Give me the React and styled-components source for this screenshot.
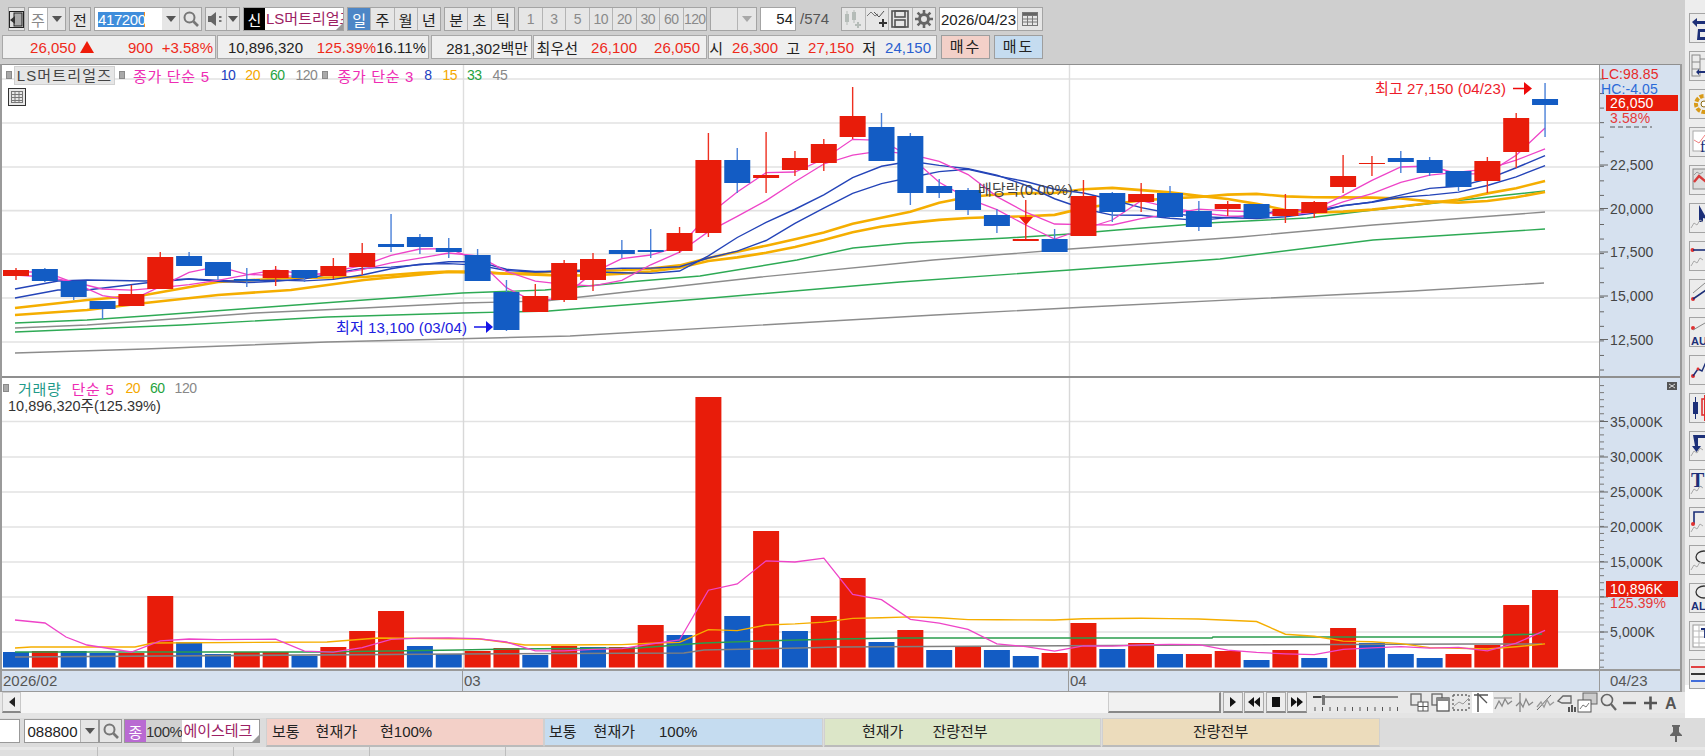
import React from 'react'
import styled, { createGlobalStyle } from 'styled-components'

const FONT = '"Liberation Sans", "Noto Sans CJK KR", sans-serif'

const RED = '#e81c0a'
const BLUE = '#135cc4'
const STEP = 28.85
const xAt = (i) => 16 + STEP * i

// [body top, body bottom, high, low, colour] in page pixels
const candles = [
  [270, 276, 268, 280, 'r'], [269, 281, 268, 282, 'b'], [281, 297, 281, 300, 'b'], [301, 309, 301, 319, 'b'],
  [294, 306, 285, 306, 'r'], [257, 289, 252, 289, 'r'], [256, 266, 252, 266, 'b'], [262, 276, 262, 280, 'b'],
  [279, 281, 268, 287, 'b'], [270, 278, 266, 286, 'r'], [270, 278, 270, 282, 'b'], [266, 276, 258, 279, 'r'],
  [253, 267, 243, 275, 'r'], [244, 247, 214, 252, 'b'], [237, 247, 234, 254, 'b'], [248, 252, 238, 258, 'b'],
  [255, 281, 249, 281, 'b'], [292, 330, 280, 331, 'b'], [296, 312, 284, 312, 'r'], [263, 300, 260, 302, 'r'],
  [259, 280, 253, 291, 'r'], [250, 254, 240, 258, 'b'], [250, 252, 229, 258, 'b'], [233, 251, 227, 253, 'r'],
  [160, 233, 133, 237, 'r'], [160, 183, 148, 193, 'b'], [175, 178, 132, 193, 'r'], [158, 170, 151, 176, 'r'],
  [144, 163, 139, 171, 'r'], [116, 137, 87, 139, 'r'], [127, 161, 113, 161, 'b'], [136, 193, 133, 205, 'b'],
  [186, 193, 179, 198, 'b'], [190, 210, 188, 215, 'b'], [215, 226, 209, 233, 'b'], [239, 241, 200, 241, 'r'],
  [239, 252, 229, 252, 'b'], [196, 236, 180, 236, 'r'], [193, 212, 192, 222, 'b'], [194, 202, 183, 212, 'r'],
  [193, 217, 186, 217, 'b'], [211, 227, 201, 231, 'b'], [204, 209, 201, 216, 'r'], [204, 218, 204, 218, 'b'],
  [209, 216, 194, 223, 'r'], [202, 213, 201, 218, 'r'], [176, 187, 155, 193, 'r'], [163, 164, 156, 176, 'r'],
  [158, 162, 151, 173, 'b'], [160, 173, 157, 176, 'b'], [171, 187, 171, 191, 'b'], [161, 181, 157, 193, 'r'],
  [118, 152, 113, 168, 'r'], [99, 105, 83, 137, 'b'],
]

// [bar top, colour]
const volumes = [
  [652, 'b'], [651, 'r'], [651, 'b'], [653, 'b'], [653, 'r'], [596, 'r'], [642, 'b'], [654, 'b'], [652, 'r'],
  [652, 'r'], [656, 'b'], [647, 'r'], [631, 'r'], [611, 'r'], [646, 'b'], [654, 'b'], [651, 'r'], [648, 'r'],
  [655, 'b'], [646, 'r'], [647, 'b'], [647, 'r'], [625, 'r'], [635, 'b'], [397, 'r'], [616, 'b'], [531, 'r'],
  [631, 'b'], [616, 'r'], [578, 'r'], [642, 'b'], [630, 'r'], [650, 'b'], [647, 'r'], [650, 'b'], [656, 'b'],
  [653, 'r'], [623, 'r'], [649, 'b'], [643, 'r'], [654, 'b'], [654, 'r'], [651, 'r'], [660, 'b'], [650, 'r'],
  [658, 'b'], [628, 'r'], [643, 'b'], [654, 'b'], [658, 'b'], [654, 'r'], [645, 'r'], [605, 'r'], [590, 'r'],
]

const closes = candles.map((c) => (c[4] === 'r' ? c[0] : c[1]))
const volTops = volumes.map((v) => v[0])

const movingAvg = (values, period, head) => {
  const pts = [...head]
  values.forEach((_, i) => {
    if (i < period - 1) return
    const slice = values.slice(i - period + 1, i + 1)
    pts.push([xAt(i), slice.reduce((a, b) => a + b, 0) / period])
  })
  return pts
}

const priceLines = [
  { color: '#8c8c8c', w: 1.4, pts: [[15, 353], [145, 349], [327, 342], [491, 338], [570, 336], [935, 315], [1087, 307], [1413, 291], [1544, 283]] },
  { color: '#8c8c8c', w: 1.4, pts: [[15, 328], [87, 325], [145, 321], [255, 313], [364, 308], [462, 303], [545, 301], [761, 277], [933, 260], [1070, 249], [1240, 237], [1373, 225], [1545, 212]] },
  { color: '#2eaa55', w: 1.4, pts: [[15, 332], [87, 329], [182, 325], [327, 317], [462, 313], [549, 311], [700, 299], [900, 282], [1070, 270], [1220, 259], [1373, 240], [1545, 229]] },
  { color: '#2eaa55', w: 1.4, pts: [[15, 323], [87, 320], [145, 316], [255, 308], [364, 300], [462, 293], [545, 290], [640, 281], [700, 276], [797, 260], [853, 248], [907, 243], [1007, 238], [1070, 234], [1117, 230], [1207, 223], [1307, 218], [1373, 210], [1507, 195], [1545, 191]] },
  { color: '#f5ae00', w: 2.6, pts: movingAvg(closes, 20, [[15, 315], [87, 310], [145, 303], [218, 295], [291, 290], [364, 280], [447, 272], [491, 273]]) },
  { color: '#f5ae00', w: 2.6, pts: movingAvg(closes, 15, [[15, 308], [87, 300], [145, 295], [218, 282], [291, 278], [364, 277]]) },
  { color: '#2444b8', w: 1.4, pts: movingAvg(closes, 10, [[15, 298], [58, 290], [87, 290], [145, 283], [189, 279], [233, 281]]) },
  { color: '#2444b8', w: 1.4, pts: movingAvg(closes, 8, [[15, 289], [58, 281], [87, 280], [145, 281], [189, 279]]) },
  { color: '#ee44c8', w: 1.3, pts: movingAvg(closes, 5, [[16, 275], [45, 277], [74, 282], [102, 289]]) },
  { color: '#ee44c8', w: 1.3, pts: movingAvg(closes, 3, [[16, 272], [45, 272]]) },
]

const volumeLines = [
  { color: '#7f7f7f', w: 1.6, pts: [[15, 657], [459, 654], [684, 653], [704, 650], [800, 648], [838, 647], [1208, 645], [1473, 644], [1542, 644]] },
  { color: '#2a9d4d', w: 1.6, pts: [[15, 652], [320, 652], [388, 651], [459, 650], [510, 649], [638, 648], [704, 643], [760, 641], [838, 639], [897, 638], [1212, 638], [1213, 637], [1502, 637], [1504, 635], [1542, 634]] },
  { color: '#f5ae00', w: 1.4, pts: movingAvg(volTops, 20, [[15, 648], [31, 647], [135, 647], [153, 643], [327, 642], [378, 638], [480, 639], [525, 645]]) },
  { color: '#ee44c8', w: 1.3, pts: movingAvg(volTops, 5, [[15, 620], [25, 621], [45, 623], [66, 637], [87, 645]]) },
]

const toPoints = (pts) => pts.map((p) => p.join(',')).join(' ')

const GlobalStyle = createGlobalStyle`
  * { box-sizing: border-box; }
  html, body { margin: 0; padding: 0; overflow: hidden; background: #cfcfcf; }
  body { font-family: ${FONT}; font-size: 15px; color: #222; }
`

const Page = styled.div`
  width: 1705px;
  height: 756px;
  display: flex;
  flex-direction: column;
  overflow: hidden;
  background: #cfcfcf;
`
const Upper = styled.div`
  display: flex;
  height: 718px;
`
const Main = styled.div`
  width: 1685px;
  display: flex;
  flex-direction: column;
`

// top toolbars
const TopBar = styled.div`
  height: 64px;
  padding-top: 7px;
  display: flex;
  flex-direction: column;
  gap: 4px;
`
const ToolRow = styled.div`
  height: 24px;
  display: flex;
  gap: 3px;
  padding-left: 8px;
`
const Group = styled.div`
  display: flex;
  height: 24px;
  width: ${(p) => p.$w}px;
  border: 1px solid #a4a4a4;
  background: #e6e6e6;
`
const Seg = styled.div`
  flex: ${(p) => (p.$w ? `0 0 ${p.$w}px` : '1')};
  min-width: 0;
  display: flex;
  align-items: center;
  justify-content: center;
  border-right: 1px solid #b4b4b4;
  background: ${(p) => (p.$active ? '#4d86c6' : p.$white ? '#fff' : '#e6e6e6')};
  color: ${(p) => (p.$active ? '#fff' : p.$dim ? '#8a8a8a' : '#222')};
  font-size: ${(p) => (p.$tight ? 14 : 15)}px;
  letter-spacing: ${(p) => (p.$tight ? -0.6 : 0)}px;
  white-space: nowrap;
  &:last-child { border-right: 0; }
`
const Caret = styled.i`
  width: 0;
  height: 0;
  border-left: 5px solid transparent;
  border-right: 5px solid transparent;
  border-top: 6px solid ${(p) => (p.$dim ? '#a8a8a8' : '#555')};
`
const CodeInput = styled.div`
  flex: 1;
  background: #fff;
  display: flex;
  align-items: center;
  padding-left: 3px;
`
const Selected = styled.span`
  background: #3f8ddb;
  color: #fff;
  height: 15px;
  line-height: 15px;
  width: 47px;
  letter-spacing: -0.4px;
  border-right: 1px solid #f08a24;
`
const Badge = styled.div`
  flex: 0 0 ${(p) => p.$w}px;
  background: ${(p) => p.$bg};
  color: ${(p) => p.$color};
  letter-spacing: ${(p) => p.$ls || 0}px;
  display: flex;
  align-items: center;
  justify-content: center;
`
const StockName = styled.div`
  position: relative;
  flex: 1;
  background: #fff;
  color: ${(p) => p.$color || '#9c2163'};
  overflow: hidden;
  white-space: nowrap;
  line-height: 22px;
  padding-left: 1px;
  &::after {
    content: '';
    position: absolute;
    right: 0;
    bottom: 0;
    border-left: 7px solid transparent;
    border-bottom: 7px solid #9a9a9a;
  }
`
const PageInput = styled.div`
  width: 36px;
  height: 24px;
  border: 1px solid #a4a4a4;
  background: #fff;
  text-align: right;
  padding-right: 2px;
  line-height: 22px;
`
const PageTotal = styled.div`
  width: 39px;
  line-height: 24px;
  color: #555;
  padding-left: 1px;
`

const InfoRow = styled.div`
  height: 24px;
  display: flex;
  gap: 1px;
  padding-left: 2px;
`
const InfoBox = styled.div`
  width: ${(p) => p.$w}px;
  height: 24px;
  margin-right: ${(p) => p.$mr || 0}px;
  border: 1px solid #a8a8a8;
  background: #efefef;
  display: flex;
  align-items: center;
  white-space: nowrap;
`
const Value = styled.span`
  flex: 0 0 ${(p) => p.$w}px;
  text-align: right;
  color: ${(p) => p.$color || '#222'};
`
const UpMark = styled.i`
  width: 0;
  height: 0;
  margin-left: 4px;
  border-left: 7px solid transparent;
  border-right: 7px solid transparent;
  border-bottom: 12px solid #ee1c0a;
`
const OrderBtn = styled.div`
  width: 49px;
  height: 24px;
  margin-left: ${(p) => p.$ml}px;
  border: 1px solid #9e9e9e;
  background: ${(p) => p.$bg};
  text-align: center;
  line-height: 22px;
  letter-spacing: 2px;
`

// chart panel
const ChartPanel = styled.div`
  width: 1682px;
  height: 628px;
  display: flex;
  flex-direction: column;
  border-left: 2px solid #9a9a9a;
  border-right: 2px solid #9a9a9a;
  background: #d6e1ef;
`
const Pane = styled.div`
  display: flex;
  height: ${(p) => p.$h}px;
  border-top: ${(p) => p.$line}px solid #8f8f8f;
`
const Plot = styled.div`
  position: relative;
  width: 1597px;
  background: #fff;
  svg { display: block; }
`
const AxisCol = styled.div`
  position: relative;
  width: 81px;
  border-left: 1px solid #9a9a9a;
  svg { display: block; }
`
const Legend = styled.div`
  position: absolute;
  left: 0;
  top: ${(p) => p.$top}px;
  height: 20px;
  display: flex;
  align-items: center;
  white-space: nowrap;
`
const LegendDot = styled.i`
  flex: 0 0 6px;
  height: 8px;
  margin-left: ${(p) => p.$ml}px;
  background: #a9a9a9;
  border: 1px solid #8a8a8a;
`
const LegendTag = styled.div`
  margin-left: 2px;
  width: 101px;
  height: 19px;
  line-height: 18px;
  text-align: center;
  background: #e6e6e6;
  border: 1px solid #d0d0d0;
  color: #444;
  letter-spacing: 1.2px;
`
const LegendText = styled.span`
  margin-left: ${(p) => p.$ml}px;
  color: ${(p) => p.$color};
  font-size: ${(p) => (p.$num ? 14 : 15)}px;
  letter-spacing: ${(p) => (p.$num ? -0.5 : 0.7)}px;
`
const VolumeValue = styled.div`
  position: absolute;
  left: 6px;
  top: 16px;
  color: #333;
  font-size: 14.5px;
`
const TableBtn = styled.div`
  position: absolute;
  left: 6px;
  top: 23px;
  width: 18px;
  height: 18px;
  border: 1px solid #333;
  background: #e8e8e8;
  display: flex;
  align-items: center;
  justify-content: center;
`
const PaneToggle = styled.div`
  position: absolute;
  right: 3px;
  top: 4px;
  width: 10px;
  height: 8px;
  background: #555;
  display: flex;
  align-items: center;
  justify-content: center;
`
const AxisText = styled.text`
  font-family: ${FONT};
  font-size: ${(p) => p.$size || 14}px;
  fill: ${(p) => p.$color || '#444'};
  letter-spacing: 0.1px;
`
const DateAxis = styled.div`
  display: flex;
  height: 23px;
  border-top: 2px solid #9a9a9a;
  border-bottom: 1px solid #9a9a9a;
  color: #555;
`
const DateCell = styled.div`
  width: ${(p) => p.$w}px;
  padding-left: ${(p) => p.$pad || 1}px;
  line-height: 20px;
  border-right: ${(p) => (p.$last ? 0 : 1)}px solid #9a9a9a;
`

// scroll row
const ScrollRow = styled.div`
  height: 21px;
  display: flex;
  background: #e8e8e8;
`
const ScrollArrow = styled.div`
  width: 19px;
  margin-left: 2px;
  background: #eee;
  border: 1px solid #c8c8c8;
  border-bottom: 2px solid #888;
  display: flex;
  align-items: center;
  justify-content: center;
`
const ScrollTrack = styled.div`
  flex: 0 0 1087px;
  background: #f6f6f6;
`
const ScrollThumb = styled.div`
  flex: 0 0 113px;
  background: #f1f1f1;
  border: 1px solid #ccc;
  border-right: 2px solid #888;
  border-bottom: 2px solid #888;
`
const PlayBtn = styled.div`
  width: 20px;
  margin-left: 1.5px;
  background: #ededed;
  border: 1px solid #aaa;
  border-bottom: 2px solid #888;
  display: flex;
  align-items: center;
  justify-content: center;
`
const SliderBox = styled.div`
  margin-left: 5px;
  width: 90px;
  svg { display: block; }
`
const ToolIcons = styled.div`
  display: flex;
  margin-left: 7px;
`
const ToolIcon = styled.div`
  width: 21px;
  height: 21px;
  background: ${(p) => (p.$active ? '#fff' : 'transparent')};
  svg { display: block; }
`
const Filler = styled.div`
  height: 5px;
  background: #e4e4e4;
`

// right rail
const Rail = styled.div`
  width: 20px;
  background: #fff;
  overflow: hidden;
`
const RailInner = styled.div`
  position: relative;
  height: 685px;
  padding: 13px 0 0 4px;
  background: #ededed;
  display: flex;
  flex-direction: column;
  gap: 8px;
`
const RailBtn = styled.div`
  flex: 0 0 29.5px;
  width: 30px;
  background: #ececec;
  border: 1px solid #a4a4a4;
  svg { display: block; }
`

// bottom order row
const OrderRow = styled.div`
  height: 29px;
  display: flex;
  background: #dcdcdc;
  color: #222;
`
const BlankInput = styled.div`
  width: 20px;
  height: 24px;
  margin-top: 1px;
  background: #fff;
  border: 1px solid #999;
  border-left: 0;
`
const StockCombo = styled.div`
  display: flex;
  height: 24px;
  width: ${(p) => p.$w}px;
  margin: 1px 0 0 ${(p) => p.$ml}px;
  border: 1px solid #999;
  background: #e6e6e6;
`
const OrderCell = styled.div`
  width: ${(p) => p.$w}px;
  margin-left: ${(p) => p.$ml || 0}px;
  background: ${(p) => p.$bg};
  border: 1px solid #d0d0d0;
  border-bottom: 2px solid #bbb;
  line-height: 25px;
  display: flex;
  white-space: nowrap;
`
const OrderText = styled.span`
  margin-left: ${(p) => p.$ml}px;
`
const PinBox = styled.div`
  margin-left: 289px;
  padding-top: 6px;
`
const BottomStrip = styled.div`
  height: 9px;
  display: flex;
  background: #e8e8e8;
  border-bottom: 6px solid #dfdfdf;
`
const StripTab = styled.div`
  width: 136px;
  height: 9px;
  border-right: 1px solid #bdbdbd;
  margin-left: ${(p) => p.$ml || 0}px;
`

const Search = ({ color = '#777' }) => (
  <svg width="18" height="18" viewBox="0 0 18 18">
    <circle cx="7.5" cy="7.5" r="5" fill="none" stroke={color} strokeWidth="2" />
    <path d="M11.5 11.5L16 16" stroke={color} strokeWidth="2.6" />
  </svg>
)

const icons = {
  layout: (
    <svg width="15" height="17" viewBox="0 0 15 17">
      <rect x="0.5" y="0.5" width="14" height="16" fill="#ddd" stroke="#222" />
      <rect x="5" y="2" width="8" height="13" fill="#aaa" stroke="#222" />
      <path d="M1 9L6 5V13Z" fill="#333" />
    </svg>
  ),
  speaker: (
    <svg width="18" height="16" viewBox="0 0 18 16">
      <path d="M1 5H4L9 1V15L4 11H1Z" fill="#666" />
      <rect x="12" y="5" width="2.5" height="2" fill="#777" />
      <rect x="12" y="9" width="2.5" height="2" fill="#777" />
    </svg>
  ),
  candlesDim: (
    <svg width="22" height="20" viewBox="0 0 22 20" fill="#b5bcb8">
      <rect x="3" y="5" width="4" height="8" /><rect x="4.5" y="2" width="1" height="14" />
      <rect x="10" y="3" width="4" height="8" /><rect x="11.5" y="1" width="1" height="13" />
      <path d="M15 13h2v2h2v2h-2v2h-2v-2h-2v-2h2z" />
    </svg>
  ),
  chartAdd: (
    <svg width="22" height="20" viewBox="0 0 22 20" fill="none">
      <path d="M1 7L5 3L9 7L12 5" stroke="#777" />
      <path d="M8 3L13 8L18 2" stroke="#555" />
      <path d="M16 10h2v3h3v2h-3v3h-2v-3h-3v-2h3z" fill="#333" />
    </svg>
  ),
  save: (
    <svg width="20" height="20" viewBox="0 0 20 20" fill="none" stroke="#555" strokeWidth="1.6">
      <rect x="2" y="2" width="16" height="16" />
      <rect x="5" y="2" width="10" height="6" />
      <rect x="5" y="11" width="10" height="7" />
    </svg>
  ),
  gear: (
    <svg width="20" height="20" viewBox="0 0 20 20">
      <circle cx="10" cy="10" r="4.5" fill="none" stroke="#666" strokeWidth="3" />
      <path d="M10 1v4M10 15v4M1 10h4M15 10h4M3.6 3.6l2.8 2.8M13.6 13.6l2.8 2.8M3.6 16.4l2.8-2.8M13.6 6.4l2.8-2.8" stroke="#666" strokeWidth="2.6" />
    </svg>
  ),
  calendar: (
    <svg width="16" height="14" viewBox="0 0 16 14" fill="none" stroke="#777">
      <rect x="0.5" y="0.5" width="15" height="13" />
      <rect x="0.5" y="0.5" width="15" height="3" fill="#666" />
      <path d="M5.5 4v9M10.5 4v9M1 7h14M1 10h14" />
    </svg>
  ),
}

const Candles = () =>
  candles.map(([top, bottom, high, low, col], i) => {
    const x = xAt(i)
    const fill = col === 'r' ? RED : BLUE
    return (
      <g key={i}>
        <line x1={x} x2={x} y1={high} y2={low} stroke={col === 'r' ? '#ee3020' : '#4a80d8'} strokeWidth="1.4" />
        <rect x={x - 13} y={top} width="26" height={bottom - top} fill={fill} />
      </g>
    )
  })

const Lines = ({ data }) =>
  data.map((l, i) => (
    <polyline key={i} points={toPoints(l.pts)} fill="none" stroke={l.color} strokeWidth={l.w} />
  ))

const PRICE_GRID = [79, 123, 167, 210.6, 254, 298, 342]
const VOL_GRID = [421.5, 457, 492, 527, 562, 597, 632]

const PriceChart = () => (
  <svg width="1597" height="311" viewBox="2 65 1597 311">
    {PRICE_GRID.map((y) => <line key={y} x1="2" x2="1599" y1={y} y2={y} stroke="#e2e2e2" strokeWidth="1.6" />)}
    <line x1="463.5" x2="463.5" y1="65" y2="376" stroke="#dedede" strokeWidth="1.4" />
    <line x1="1069.5" x2="1069.5" y1="65" y2="376" stroke="#dedede" strokeWidth="1.4" />
    <Lines data={priceLines} />
    <Candles />
    <AxisText x="978" y="195" $size={15} $color="#444">배당락(0.00%)-</AxisText>
    <path d="M1019 217H1033L1026 225Z" fill="#ee1c0a" />
    <AxisText x="1375" y="94" $size={15} $color="#ee1c2a">최고 27,150 (04/23)</AxisText>
    <path d="M1513 88.5H1524" stroke="#ee0a0a" strokeWidth="1.5" />
    <path d="M1524 82L1532 88.5L1524 95Z" fill="#ee0a0a" />
    <AxisText x="336" y="333" $size={15} $color="#2020e0">최저 13,100 (03/04)</AxisText>
    <path d="M474 327H486" stroke="#1414e8" strokeWidth="1.5" />
    <path d="M486 321L493 327L486 333Z" fill="#1414e8" />
  </svg>
)

const PriceAxis = () => {
  const minor = []
  for (let y = 79; y < 376; y += 14.55) minor.push(y)
  return (
    <svg width="80" height="311" viewBox="1600 65 80 311">
      {minor.map((y) => <line key={y} x1="1600" x2="1604" y1={y} y2={y} stroke="#666" />)}
      {[165, 208.5, 252, 296, 339.5].map((y, i) => (
        <g key={y}>
          <line x1="1600" x2="1608" y1={y} y2={y} stroke="#666" />
          <AxisText x="1610" y={y + 5}>{['22,500', '20,000', '17,500', '15,000', '12,500'][i]}</AxisText>
        </g>
      ))}
      <line x1="1610" x2="1652" y1="127" y2="127" stroke="#555" strokeDasharray="5 3" />
      <AxisText x="1601" y="79" $color="#e62a2a">LC:98.85</AxisText>
      <AxisText x="1601" y="94" $color="#2a6ad8">HC:-4.05</AxisText>
      <rect x="1606" y="95" width="72" height="16" fill={RED} />
      <AxisText x="1610" y="108" $color="#fff">26,050</AxisText>
      <AxisText x="1610" y="123" $color="#e63a3a">3.58%</AxisText>
    </svg>
  )
}

const VolumeChart = () => (
  <svg width="1597" height="291" viewBox="2 378 1597 291">
    {VOL_GRID.map((y) => <line key={y} x1="2" x2="1599" y1={y} y2={y} stroke="#e2e2e2" strokeWidth="1.6" />)}
    <line x1="463.5" x2="463.5" y1="378" y2="669" stroke="#d8d8d8" strokeWidth="1.4" />
    <line x1="1069.5" x2="1069.5" y1="378" y2="669" stroke="#d8d8d8" strokeWidth="1.4" />
    {volumes.map(([top, col], i) => (
      <rect key={i} x={xAt(i) - 13} y={top} width="26" height={667.5 - top} fill={col === 'r' ? RED : BLUE} />
    ))}
    <Lines data={volumeLines} />
  </svg>
)

const VolumeAxis = () => {
  const labels = ['35,000K', '30,000K', '25,000K', '20,000K', '15,000K', '', '5,000K']
  const minor = []
  for (let y = 632 + 35.2; y > 385; y -= 7.04) minor.push(y)
  return (
    <svg width="80" height="291" viewBox="1600 378 80 291">
      {minor.map((y) => <line key={y} x1="1600" x2="1604" y1={y} y2={y} stroke="#777" />)}
      {VOL_GRID.map((y, i) => (
        <g key={y}>
          <line x1="1600" x2="1608" y1={y} y2={y} stroke="#666" />
          {labels[i] && <AxisText x="1610" y={y + 5}>{labels[i]}</AxisText>}
        </g>
      ))}
      <rect x="1606" y="581" width="72" height="16" fill={RED} />
      <AxisText x="1610" y="594" $color="#fff">10,896K</AxisText>
      <AxisText x="1610" y="608" $color="#e63a3a">125.39%</AxisText>
    </svg>
  )
}

const stroke = { fill: 'none', stroke: '#666', strokeWidth: 1.3 }
const scrollTools = [
  <><rect x="2" y="2" width="10" height="11" {...stroke} /><rect x="9" y="10" width="10" height="9" fill="#fff" stroke="#555" /><path d="M14 10v9M9 14.5h10" stroke="#555" /></>,
  <><rect x="2" y="2" width="10" height="11" {...stroke} /><rect x="7" y="6" width="12" height="13" fill="#fff" stroke="#555" strokeWidth="1.3" /><rect x="7" y="6" width="12" height="3" fill="#888" /></>,
  <><path d="M2 3h16M2 18h16M2 3v15M18 3v15" {...stroke} strokeDasharray="2 2" /><path d="M3 14l5-4 4 2 6-6" stroke="#999" fill="none" /></>,
  <><path d="M6 1v19" stroke="#444" strokeWidth="1.4" /><path d="M2 3h14M7 3l8 8" stroke="#555" fill="none" strokeWidth="1.3" /></>,
  <><path d="M1 6h18" stroke="#888" /><path d="M2 17l4-8 3 5 3-7 3 5 4-3" {...stroke} stroke="#888" /></>,
  <><path d="M6 1v19" stroke="#666" /><path d="M2 14l4-4 3 5 3-8 3 6 4-3" {...stroke} stroke="#888" /></>,
  <><path d="M2 18l14-15" stroke="#666" /><path d="M2 15l4-5 3 5 3-7 3 5 4-3" {...stroke} stroke="#999" /></>,
  <><path d="M2 9l5-5h8v7h-9z" {...stroke} /><rect x="12" y="15" width="2" height="5" fill="#555" /><rect x="15" y="13" width="2" height="7" fill="#555" /><rect x="18" y="15" width="2" height="5" fill="#555" /></>,
  <><rect x="6" y="1" width="14" height="11" fill="#ccc" stroke="#666" /><rect x="1" y="8" width="13" height="12" fill="#fff" stroke="#555" /><path d="M3 17l3-4 3 2 3-4" stroke="#777" fill="none" /></>,
  <><circle cx="9" cy="8" r="5.5" fill="none" stroke="#666" strokeWidth="1.6" /><path d="M13 12l5 6" stroke="#666" strokeWidth="2.2" /></>,
  <path d="M4 11h13" stroke="#555" strokeWidth="2.4" />,
  <path d="M4 11h13M10.5 4.5v13" stroke="#555" strokeWidth="2.6" />,
  <text x="4" y="17" fontFamily="Liberation Sans" fontWeight="700" fontSize="16" fill="#555">A</text>,
]

const wave = <path d="M1 24l3-5 3 2 3-5 3 2" fill="none" stroke="#aaa" />
const NAVY = '#1c2f78'
const railIcons = [
  <><path d="M2 8L7 4v3h8v3H7v3z" fill={NAVY} /><path d="M8 15h7v3h-5v5h5v3H7z" fill={NAVY} /></>,
  <><rect x="2" y="3" width="8" height="21" fill="none" stroke="#888" /><path d="M2 10h8M2 17h8M10 7h6" stroke="#888" /><path d="M6 20l3-3v2h6v2H9v2z" fill={NAVY} /></>,
  <><circle cx="14" cy="14" r="8" fill="none" stroke="#d89a18" strokeWidth="4" strokeDasharray="4 1.5" /><circle cx="14" cy="14" r="3" fill="#fff" stroke="#8a6a10" /></>,
  <><rect x="3" y="3" width="20" height="20" fill="#fff" stroke="#aaa" /><path d="M4 12l5 3 6-8" fill="none" stroke="#f08080" /><text x="10" y="24" fontFamily="Liberation Serif" fontSize="16" fill={NAVY}>f</text></>,
  <><rect x="3" y="3" width="20" height="20" fill="#ddd" stroke="#888" /><path d="M4 16l5-6 6 5 2-2" fill="none" stroke="#d83a3a" strokeWidth="2.4" /><path d="M4 9l3-3 3 2 3-2" fill="none" stroke="#999" /></>,
  <><path d="M9 1l8 14-4-1v4H9z" fill={NAVY} />{wave}</>,
  <><circle cx="2.5" cy="8" r="2" fill="#e03030" /><path d="M3 8h13" stroke={NAVY} strokeWidth="1.6" />{wave}</>,
  <><circle cx="3" cy="19" r="2" fill="#e03030" /><path d="M3 19l13-9" stroke={NAVY} strokeWidth="1.6" /><path d="M3 13L15 3" stroke="#888" /></>,
  <><circle cx="3" cy="10" r="2" fill="#e03030" /><path d="M3 12l12-7" stroke="#888" /><text x="1" y="27" fontFamily="Liberation Sans" fontWeight="700" fontSize="11" fill={NAVY}>AU</text></>,
  <><circle cx="3" cy="20" r="2" fill="#e03030" /><path d="M3 20l5-7 4 2 4-9" fill="none" stroke={NAVY} strokeWidth="1.4" /><circle cx="8" cy="13" r="1.4" fill="#e03030" /></>,
  <><rect x="3" y="8" width="5" height="12" fill={NAVY} /><path d="M5.5 3v22" stroke={NAVY} /><rect x="12" y="5" width="5" height="16" fill="none" stroke="#e03030" strokeWidth="1.6" /><path d="M14.5 1v26" stroke="#e03030" /></>,
  <><path d="M3 3h13v3H8v8h3l-4.500 6L2 14h3z" fill={NAVY} />{wave}</>,
  <><text x="1" y="17" fontFamily="Liberation Serif" fontWeight="700" fontSize="20" fill={NAVY}>T</text>{wave}</>,
  <><path d="M4 16V4h10" fill="none" stroke={NAVY} strokeWidth="1.6" /><circle cx="3" cy="16" r="2" fill="#e03030" />{wave}</>,
  <><ellipse cx="14" cy="11" rx="8" ry="6" fill="none" stroke="#333" strokeWidth="1.3" />{wave}</>,
  <><ellipse cx="14" cy="8" rx="8" ry="6" fill="none" stroke="#333" strokeWidth="1.3" /><text x="1" y="26" fontFamily="Liberation Sans" fontWeight="700" fontSize="11" fill={NAVY}>ALL</text></>,
  <><rect x="3" y="3" width="20" height="22" fill="#fff" stroke="#999" /><path d="M3 9h20M3 15h20M3 21h20M9 3v22" stroke="#bbb" /><path d="M11 7h8M15 7v9" stroke={NAVY} strokeWidth="1.8" /></>,
  <><path d="M1 7h18" stroke="#e03030" strokeWidth="1.8" /><path d="M1 14h18" stroke="#222" strokeWidth="1.8" /><path d="M1 21h18" stroke="#3060d8" strokeWidth="1.8" /></>,
]

export default function App() {
  return (
    <Page>
      <GlobalStyle />
      <Upper>
        <Main>
          <TopBar>
            <ToolRow>
              <Group $w={17}><Seg>{icons.layout}</Seg></Group>
              <Group $w={38}>
                <Seg $white $dim>주</Seg>
                <Seg $w={17}><Caret /></Seg>
              </Group>
              <Group $w={22}><Seg>전</Seg></Group>
              <Group $w={108}>
                <CodeInput><Selected>417200</Selected></CodeInput>
                <Seg $w={18}><Caret /></Seg>
                <Seg $w={21}><Search /></Seg>
              </Group>
              <Group $w={35}>
                <Seg>{icons.speaker}</Seg>
                <Seg $w={12}><Caret /></Seg>
              </Group>
              <Group $w={101}>
                <Badge $w={21} $bg="#000" $color="#fff">신</Badge>
                <StockName>LS머트리얼즈</StockName>
              </Group>
              <Group $w={94}>
                <Seg $active>일</Seg><Seg>주</Seg><Seg>월</Seg><Seg>년</Seg>
              </Group>
              <Group $w={71}>
                <Seg>분</Seg><Seg>초</Seg><Seg>틱</Seg>
              </Group>
              <Group $w={189}>
                {['1', '3', '5', '10', '20', '30', '60', '120'].map((n) => <Seg key={n} $dim $tight>{n}</Seg>)}
              </Group>
              <Group $w={47}>
                <Seg />
                <Seg $w={18}><Caret $dim /></Seg>
              </Group>
              <PageInput>54</PageInput>
              <PageTotal>/574</PageTotal>
              <Group $w={95}>
                <Seg>{icons.candlesDim}</Seg>
                <Seg>{icons.chartAdd}</Seg>
                <Seg>{icons.save}</Seg>
                <Seg>{icons.gear}</Seg>
              </Group>
              <Group $w={104}>
                <Seg $white>2026/04/23</Seg>
                <Seg $w={24}>{icons.calendar}</Seg>
              </Group>
            </ToolRow>
            <InfoRow>
              <InfoBox $w={214}>
                <Value $w={73} $color="#ee2a1a">26,050</Value>
                <UpMark />
                <Value $w={59} $color="#ee2a1a">900</Value>
                <Value $w={60} $color="#ee2a1a">+3.58%</Value>
              </InfoBox>
              <InfoBox $w={212} $mr={1}>
                <Value $w={85}>10,896,320</Value>
                <Value $w={73} $color="#ee2a1a">125.39%</Value>
                <Value $w={50}>16.11%</Value>
              </InfoBox>
              <InfoBox $w={101}><Value $w={96}>281,302백만</Value></InfoBox>
              <InfoBox $w={174}>
                <Value $w={44}>최우선</Value>
                <Value $w={59} $color="#ee2a1a">26,100</Value>
                <Value $w={63} $color="#ee2a1a">26,050</Value>
              </InfoBox>
              <InfoBox $w={229}>
                <Value $w={14}>시</Value>
                <Value $w={55} $color="#ee2a1a">26,300</Value>
                <Value $w={22}>고</Value>
                <Value $w={54} $color="#ee2a1a">27,150</Value>
                <Value $w={22}>저</Value>
                <Value $w={55} $color="#2a5fd0">24,150</Value>
              </InfoBox>
              <OrderBtn $ml={3} $bg="#f3d0c8">매수</OrderBtn>
              <OrderBtn $ml={3} $bg="#c5dcf0">매도</OrderBtn>
            </InfoRow>
          </TopBar>

          <ChartPanel>
            <Pane $h={312} $line={1}>
              <Plot>
                <PriceChart />
                <Legend $top={0}>
                  <LegendDot $ml={4} />
                  <LegendTag>LS머트리얼즈</LegendTag>
                  <LegendDot $ml={4} />
                  <LegendText $ml={8} $color="#ee2cb4">종가 단순 5</LegendText>
                  <LegendText $ml={11} $num $color="#2040c0">10</LegendText>
                  <LegendText $ml={10} $num $color="#f5a800">20</LegendText>
                  <LegendText $ml={10} $num $color="#1fa33e">60</LegendText>
                  <LegendText $ml={11} $num $color="#888">120</LegendText>
                  <LegendDot $ml={5} />
                  <LegendText $ml={9} $color="#ee2cb4">종가 단순 3</LegendText>
                  <LegendText $ml={10} $num $color="#2040c0">8</LegendText>
                  <LegendText $ml={11} $num $color="#f5a800">15</LegendText>
                  <LegendText $ml={10} $num $color="#1fa33e">33</LegendText>
                  <LegendText $ml={11} $num $color="#888">45</LegendText>
                </Legend>
                <TableBtn>
                  <svg width="12" height="12" viewBox="0 0 12 12" fill="none" stroke="#777">
                    <rect x="0.5" y="0.5" width="11" height="11" />
                    <path d="M4 1v10M8 1v10M1 3.500h10M1 6.500h10M1 9.500h10" />
                  </svg>
                </TableBtn>
              </Plot>
              <AxisCol><PriceAxis /></AxisCol>
            </Pane>
            <Pane $h={293} $line={2}>
              <Plot>
                <VolumeChart />
                <Legend $top={0}>
                  <LegendDot $ml={1} />
                  <LegendText $ml={9} $color="#1f9a8a">거래량</LegendText>
                  <LegendText $ml={10} $color="#ee2cb4">단순 5</LegendText>
                  <LegendText $ml={11} $num $color="#f5a800">20</LegendText>
                  <LegendText $ml={10} $num $color="#1fa33e">60</LegendText>
                  <LegendText $ml={10} $num $color="#888">120</LegendText>
                </Legend>
                <VolumeValue>10,896,320주(125.39%)</VolumeValue>
              </Plot>
              <AxisCol>
                <VolumeAxis />
                <PaneToggle>
                  <svg width="6" height="6" viewBox="0 0 6 6"><path d="M0 1l6 4M0 5l6-4" stroke="#ddd" /></svg>
                </PaneToggle>
              </AxisCol>
            </Pane>
            <DateAxis>
              <DateCell $w={461}>2026/02</DateCell>
              <DateCell $w={606}>03</DateCell>
              <DateCell $w={531}>04</DateCell>
              <DateCell $w={80} $pad={10} $last>04/23</DateCell>
            </DateAxis>
          </ChartPanel>

          <ScrollRow>
            <ScrollArrow>
              <svg width="8" height="10" viewBox="0 0 8 10"><path d="M1 5L7 0V10Z" fill="#222" /></svg>
            </ScrollArrow>
            <ScrollTrack />
            <ScrollThumb />
            <PlayBtn><svg width="8" height="12" viewBox="0 0 8 12"><path d="M1 1L7 6L1 11Z" fill="#111" /></svg></PlayBtn>
            <PlayBtn><svg width="12" height="12" viewBox="0 0 12 12"><path d="M6 1L0 6L6 11ZM12 1L6 6L12 11Z" fill="#111" /></svg></PlayBtn>
            <PlayBtn><svg width="10" height="12" viewBox="0 0 10 12"><rect x="1" y="1" width="8" height="10" fill="#111" /></svg></PlayBtn>
            <PlayBtn><svg width="12" height="12" viewBox="0 0 12 12"><path d="M0 1L6 6L0 11ZM6 1L12 6L6 11Z" fill="#111" /></svg></PlayBtn>
            <SliderBox>
              <svg width="90" height="21" viewBox="0 0 90 21">
                <path d="M1 5H86" stroke="#888" strokeWidth="2" />
                <path d="M1 5H9" stroke="#444" strokeWidth="2" />
                <rect x="10" y="3" width="3" height="10" fill="#777" />
                {Array.from({ length: 12 }, (_, i) => (
                  <line key={i} x1={3 + i * 7.5} x2={3 + i * 7.5} y1="15" y2="19" stroke="#555" />
                ))}
              </svg>
            </SliderBox>
            <ToolIcons>
              {scrollTools.map((t, i) => (
                <ToolIcon key={i} $active={i === 3}>
                  <svg width="21" height="21" viewBox="0 0 21 21">{t}</svg>
                </ToolIcon>
              ))}
            </ToolIcons>
          </ScrollRow>
          <Filler />
        </Main>

        <Rail>
          <RailInner>
            {railIcons.map((ic, i) => (
              <RailBtn key={i}>
                <svg width="28" height="28" viewBox="0 0 28 28">{ic}</svg>
              </RailBtn>
            ))}
          </RailInner>
        </Rail>
      </Upper>

      <OrderRow>
        <BlankInput />
        <StockCombo $w={75} $ml={4}>
          <Seg $white>088800</Seg>
          <Seg $w={17}><Caret /></Seg>
        </StockCombo>
        <StockCombo $w={23} $ml={0}><Seg><Search /></Seg></StockCombo>
        <StockCombo $w={136} $ml={2}>
          <Badge $w={21} $bg="#b96ad2" $color="#fff">종</Badge>
          <Badge $w={36} $bg="#d2d2d2" $color="#333" $ls={-0.5}>100%</Badge>
          <StockName>에이스테크</StockName>
        </StockCombo>
        <OrderCell $w={278} $ml={6} $bg="#f3d0c8">
          <OrderText $ml={5}>보통</OrderText>
          <OrderText $ml={16}>현재가</OrderText>
          <OrderText $ml={23}>현100%</OrderText>
        </OrderCell>
        <OrderCell $w={279} $bg="#c5dcf0">
          <OrderText $ml={4}>보통</OrderText>
          <OrderText $ml={17}>현재가</OrderText>
          <OrderText $ml={24}>100%</OrderText>
        </OrderCell>
        <OrderCell $w={277} $ml={1} $bg="#dce6c8">
          <OrderText $ml={37}>현재가</OrderText>
          <OrderText $ml={29}>잔량전부</OrderText>
        </OrderCell>
        <OrderCell $w={278} $ml={1} $bg="#ecdcbc">
          <OrderText $ml={90}>잔량전부</OrderText>
        </OrderCell>
        <PinBox>
          <svg width="14" height="18" viewBox="0 0 14 18">
            <path d="M3 1h8v1.500L10 3v5l3 3v1H8v6H6v-6H1v-1l3-3V3L3 2.500z" fill="#666" />
          </svg>
        </PinBox>
      </OrderRow>
      <BottomStrip>
        <StripTab $ml={-38} />
        <StripTab />
        <StripTab />
        <StripTab />
      </BottomStrip>
    </Page>
  )
}
